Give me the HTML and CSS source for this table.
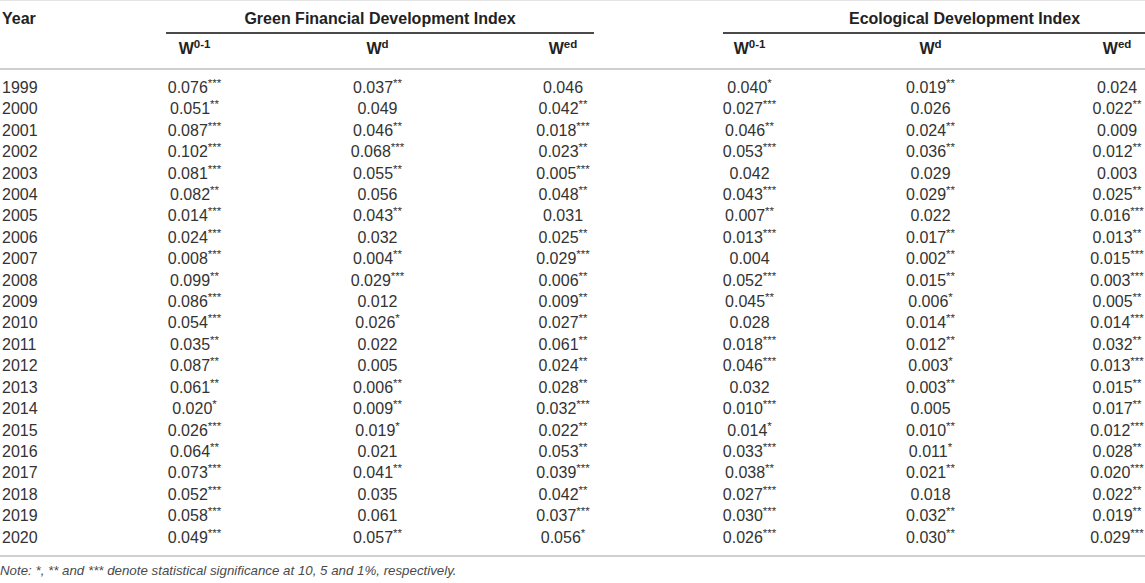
FILE: index.html
```html
<!DOCTYPE html>
<html lang="en">
<head>
    <meta charset="UTF-8">
    <meta name="viewport" content="width=device-width, initial-scale=1.0">
    <title>Weight results</title>
    <link rel="stylesheet" href="styles.css">
</head>
<body>
    <div class="wrap">
        <table class="results">
            <colgroup>
                <col class="c-year">
                <col class="c1">
                <col class="c2">
                <col class="c3">
                <col class="c4">
                <col class="c5">
                <col class="c6">
            </colgroup>
            <thead>
                <tr class="group-row">
                    <th class="year-head">Year</th>
                    <th colspan="3"><div class="group-title">Green Financial Development Index</div></th>
                    <th colspan="3"><div class="group-title eco">Ecological Development Index</div></th>
                </tr>
                <tr class="sub-row">
                    <th></th>
                    <th>W<sup>0-1</sup></th>
                    <th>W<sup>d</sup></th>
                    <th>W<sup>ed</sup></th>
                    <th>W<sup>0-1</sup></th>
                    <th>W<sup>d</sup></th>
                    <th>W<sup>ed</sup></th>
                </tr>
            </thead>
            <tbody>
                <tr><td>1999</td><td>0.076<sup>***</sup></td><td>0.037<sup>**</sup></td><td>0.046</td><td>0.040<sup>*</sup></td><td>0.019<sup>**</sup></td><td>0.024</td></tr>
                <tr><td>2000</td><td>0.051<sup>**</sup></td><td>0.049</td><td>0.042<sup>**</sup></td><td>0.027<sup>***</sup></td><td>0.026</td><td>0.022<sup>**</sup></td></tr>
                <tr><td>2001</td><td>0.087<sup>***</sup></td><td>0.046<sup>**</sup></td><td>0.018<sup>***</sup></td><td>0.046<sup>**</sup></td><td>0.024<sup>**</sup></td><td>0.009</td></tr>
                <tr><td>2002</td><td>0.102<sup>***</sup></td><td>0.068<sup>***</sup></td><td>0.023<sup>**</sup></td><td>0.053<sup>***</sup></td><td>0.036<sup>**</sup></td><td>0.012<sup>**</sup></td></tr>
                <tr><td>2003</td><td>0.081<sup>***</sup></td><td>0.055<sup>**</sup></td><td>0.005<sup>***</sup></td><td>0.042</td><td>0.029</td><td>0.003</td></tr>
                <tr><td>2004</td><td>0.082<sup>**</sup></td><td>0.056</td><td>0.048<sup>**</sup></td><td>0.043<sup>***</sup></td><td>0.029<sup>**</sup></td><td>0.025<sup>**</sup></td></tr>
                <tr><td>2005</td><td>0.014<sup>***</sup></td><td>0.043<sup>**</sup></td><td>0.031</td><td>0.007<sup>**</sup></td><td>0.022</td><td>0.016<sup>***</sup></td></tr>
                <tr><td>2006</td><td>0.024<sup>***</sup></td><td>0.032</td><td>0.025<sup>**</sup></td><td>0.013<sup>***</sup></td><td>0.017<sup>**</sup></td><td>0.013<sup>**</sup></td></tr>
                <tr><td>2007</td><td>0.008<sup>***</sup></td><td>0.004<sup>**</sup></td><td>0.029<sup>***</sup></td><td>0.004</td><td>0.002<sup>**</sup></td><td>0.015<sup>***</sup></td></tr>
                <tr><td>2008</td><td>0.099<sup>**</sup></td><td>0.029<sup>***</sup></td><td>0.006<sup>**</sup></td><td>0.052<sup>***</sup></td><td>0.015<sup>**</sup></td><td>0.003<sup>***</sup></td></tr>
                <tr><td>2009</td><td>0.086<sup>***</sup></td><td>0.012</td><td>0.009<sup>**</sup></td><td>0.045<sup>**</sup></td><td>0.006<sup>*</sup></td><td>0.005<sup>**</sup></td></tr>
                <tr><td>2010</td><td>0.054<sup>***</sup></td><td>0.026<sup>*</sup></td><td>0.027<sup>**</sup></td><td>0.028</td><td>0.014<sup>**</sup></td><td>0.014<sup>***</sup></td></tr>
                <tr><td>2011</td><td>0.035<sup>**</sup></td><td>0.022</td><td>0.061<sup>**</sup></td><td>0.018<sup>***</sup></td><td>0.012<sup>**</sup></td><td>0.032<sup>**</sup></td></tr>
                <tr><td>2012</td><td>0.087<sup>**</sup></td><td>0.005</td><td>0.024<sup>**</sup></td><td>0.046<sup>***</sup></td><td>0.003<sup>*</sup></td><td>0.013<sup>***</sup></td></tr>
                <tr><td>2013</td><td>0.061<sup>**</sup></td><td>0.006<sup>**</sup></td><td>0.028<sup>**</sup></td><td>0.032</td><td>0.003<sup>**</sup></td><td>0.015<sup>**</sup></td></tr>
                <tr><td>2014</td><td>0.020<sup>*</sup></td><td>0.009<sup>**</sup></td><td>0.032<sup>***</sup></td><td>0.010<sup>***</sup></td><td>0.005</td><td>0.017<sup>**</sup></td></tr>
                <tr><td>2015</td><td>0.026<sup>***</sup></td><td>0.019<sup>*</sup></td><td>0.022<sup>**</sup></td><td>0.014<sup>*</sup></td><td>0.010<sup>**</sup></td><td>0.012<sup>***</sup></td></tr>
                <tr><td>2016</td><td>0.064<sup>**</sup></td><td>0.021</td><td>0.053<sup>**</sup></td><td>0.033<sup>***</sup></td><td>0.011<sup>*</sup></td><td>0.028<sup>**</sup></td></tr>
                <tr><td>2017</td><td>0.073<sup>***</sup></td><td>0.041<sup>**</sup></td><td>0.039<sup>***</sup></td><td>0.038<sup>**</sup></td><td>0.021<sup>**</sup></td><td>0.020<sup>***</sup></td></tr>
                <tr><td>2018</td><td>0.052<sup>***</sup></td><td>0.035</td><td>0.042<sup>**</sup></td><td>0.027<sup>***</sup></td><td>0.018</td><td>0.022<sup>**</sup></td></tr>
                <tr><td>2019</td><td>0.058<sup>***</sup></td><td>0.061</td><td>0.037<sup>***</sup></td><td>0.030<sup>***</sup></td><td>0.032<sup>**</sup></td><td>0.019<sup>**</sup></td></tr>
                <tr><td>2020</td><td>0.049<sup>***</sup></td><td>0.057<sup>**</sup></td><td>0.056<sup>*</sup></td><td>0.026<sup>***</sup></td><td>0.030<sup>**</sup></td><td>0.029<sup>***</sup></td></tr>
            </tbody>
        </table>
        <p class="note">Note: *, ** and *** denote statistical significance at 10, 5 and 1%, respectively.</p>
    </div>
</body>
</html>
```

FILE: styles.css
```css
html, body {
    margin: 0;
    padding: 0;
    overflow: hidden;
    background: #fff;
}
body {
    font-family: 'Liberation Sans', Arial, sans-serif;
    color: #333;
}
.wrap {
    width: 1216px;
}
.results {
    width: 1216px;
    table-layout: fixed;
    border-collapse: collapse;
    border-top: 1px solid #e4e4e4;
    border-bottom: 2px solid #cfcfcf;
    font-size: 16px;
}
.c-year { width: 104px; }
.c1 { width: 181px; }
.c2 { width: 185px; }
.c3 { width: 186px; }
.c4 { width: 187px; }
.c5 { width: 175px; }
.c6 { width: 198px; }
th {
    font-weight: bold;
    color: #222;
    text-align: center;
    padding: 0;
}
.group-row th {
    height: 23px;
    vertical-align: top;
    padding-top: 9px;
}
.year-head {
    text-align: left !important;
    padding-left: 2px !important;
}
.group-title {
    margin: 0 62px;
    padding-bottom: 4px;
    border-bottom: 2px solid #4a4a4a;
    line-height: 18px;
}
.group-title.eco {
    margin: 0 -10px 0 67px;
    padding-right: 20px;
}
.sub-row th {
    height: 30px;
    border-bottom: 2px solid #cfcfcf;
    vertical-align: middle;
    padding-bottom: 4px;
}
sup {
    font-size: 11.5px;
    line-height: 0;
    vertical-align: 6px;
}
td {
    text-align: center;
    line-height: 21.4px;
    padding: 0;
}
td:first-child {
    text-align: left;
    padding-left: 2px;
}
tbody tr:first-child td {
    padding-top: 7px;
}
tbody tr:last-child td {
    padding-bottom: 7px;
}
.note {
    margin: 6px 0 0;
    font-size: 13.3px;
    line-height: 16px;
    font-style: italic;
    color: #4a4a4a;
}
```
